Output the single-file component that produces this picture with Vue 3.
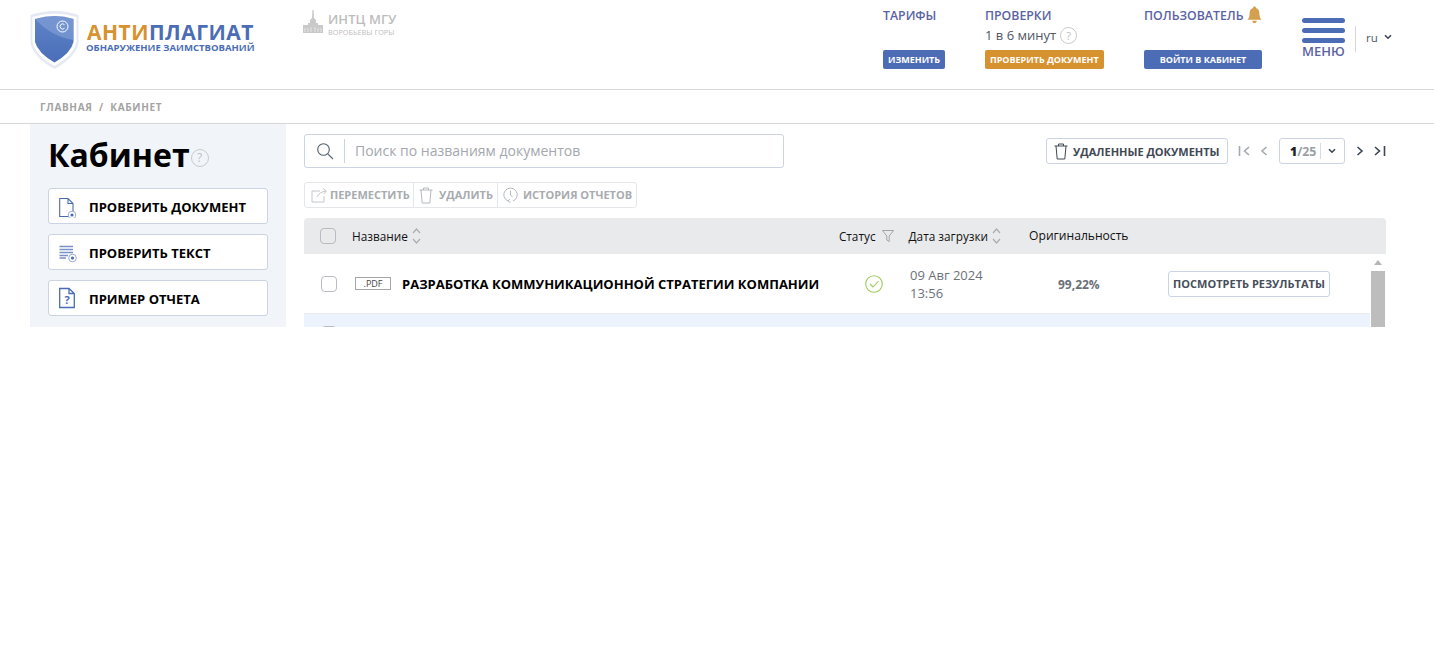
<script setup>
const nav = [
  { title: 'ТАРИФЫ', btn: 'ИЗМЕНИТЬ', cls: 'col-a', btnCls: '' },
  { title: 'ПРОВЕРКИ', btn: 'ПРОВЕРИТЬ ДОКУМЕНТ', cls: 'col-b', btnCls: 'orange', sub: '1 в 6 минут' },
  { title: 'ПОЛЬЗОВАТЕЛЬ', btn: 'ВОЙТИ В КАБИНЕТ', cls: 'col-c', btnCls: 'wide', bell: true }
]
</script>

<template>
  <div class="page">
    <header class="header">
      <div class="logo">
        <svg class="shield" width="50" height="60" viewBox="0 0 50 60">
          <defs>
            <linearGradient id="sg" x1="0" y1="0" x2="0" y2="1">
              <stop offset="0" stop-color="#5f84c8" />
              <stop offset="1" stop-color="#4a6eb8" />
            </linearGradient>
          </defs>
          <path d="M0.5 6 Q25 -2 48.5 6 L48.5 34 Q46 48 24.5 60 Q3 48 .5 34 Z" fill="#e4e9f4" />
          <path d="M2.5 8 Q25 1 46.5 8 L46.5 33 Q44 46 24.5 57 Q5 46 2.5 33 Z" fill="#fff" />
          <path d="M5 10 Q25 4 43.5 10 L43.5 33 Q41 44 24.5 53.5 Q8 44 5 33 Z" fill="url(#sg)" />
          <path d="M5 10 Q25 4 43.5 10 L43.5 31 Q22 28 5 10 Z" fill="#8ba6d8" opacity=".55" />
          <circle cx="32.5" cy="17.5" r="5.5" fill="none" stroke="#fff" stroke-width="1" />
          <path d="M34.5 15.7 A2.6 2.6 0 1 0 34.5 19.3" fill="none" stroke="#fff" stroke-width="1" />
        </svg>
        <div class="logo-text">
          <div class="logo-name"><span class="orange-t">АНТИ</span>ПЛАГИАТ</div>
          <div class="logo-sub">ОБНАРУЖЕНИЕ ЗАИМСТВОВАНИЙ</div>
        </div>
      </div>

      <div class="partner">
        <svg width="20" height="24" viewBox="0 0 20 24">
          <path d="M9.4 0 L10.6 0 L11 8 L13 10 L13 13 L15 13 L15 15 L20 15 L20 23 L0 23 L0 15 L5 15 L5 13 L7 13 L7 10 L9 8 Z" fill="#c9c9c9" />
          <path d="M2 18 V22 M5 18 V22 M8 17 V22 M12 17 V22 M15 18 V22 M18 18 V22" stroke="#eee" stroke-width=".8" />
        </svg>
        <div>
          <div class="partner-name">ИНТЦ МГУ</div>
          <div class="partner-sub">ВОРОБЬЕВЫ ГОРЫ</div>
        </div>
      </div>

      <nav class="nav">
        <div v-for="n in nav" :key="n.title" class="nav-col" :class="n.cls">
          <div class="nav-title">
            {{ n.title }}
            <svg v-if="n.bell" class="bell" width="15" height="18" viewBox="0 0 14 16">
              <path d="M7 0 C8 0 8.4 .6 8.4 1.4 C11 2.2 11.6 4.4 11.6 7 C11.6 9.6 12.4 11 13.6 12.4 L.4 12.4 C1.6 11 2.4 9.6 2.4 7 C2.4 4.4 3 2.2 5.6 1.4 C5.6 .6 6 0 7 0 Z M5 13.4 L9 13.4 C9 14.8 8.2 15.6 7 15.6 C5.8 15.6 5 14.8 5 13.4 Z" fill="#d2a04e" />
            </svg>
          </div>
          <div class="nav-sub">
            <template v-if="n.sub">
              {{ n.sub }}
              <span class="help">?</span>
            </template>
          </div>
          <a class="nav-btn" :class="n.btnCls">{{ n.btn }}</a>
        </div>
      </nav>

      <div class="menu">
        <span class="bar"></span><span class="bar"></span><span class="bar"></span>
        <span class="menu-label">МЕНЮ</span>
      </div>
      <div class="lang">
        ru
        <svg width="8" height="6" viewBox="0 0 8 6"><path d="M1 1.2 L4 4.2 L7 1.2" fill="none" stroke="#3d4654" stroke-width="1.6" /></svg>
      </div>
    </header>

    <div class="crumbs">ГЛАВНАЯ&nbsp;&nbsp;/&nbsp;&nbsp;КАБИНЕТ</div>

    <main class="body">
      <aside class="side">
        <h1 class="side-title">Кабинет<span class="help big">?</span></h1>
        <a class="side-btn">
          <svg width="20" height="24" viewBox="0 0 20 24">
            <path d="M.7 4.5 H9 L14 9.5 V22.5 H.7 Z M9 4.5 V9.5 H14" fill="none" stroke="#4a6cb5" stroke-width="1.1" />
            <circle cx="13" cy="21" r="3.8" fill="#fff" stroke="#8da3cf" stroke-width=".9" />
            <circle cx="13" cy="21" r="1.6" fill="#4a6cb5" />
          </svg>
          ПРОВЕРИТЬ ДОКУМЕНТ
        </a>
        <a class="side-btn">
          <svg width="20" height="24" viewBox="0 0 20 24">
            <path d="M.5 6.5 H14 M.5 9.5 H14 M.5 12.5 H14 M.5 15.5 H9 M.5 18 H7" fill="none" stroke="#7891c8" stroke-width="1.4" />
            <circle cx="13.5" cy="18" r="3.8" fill="#fff" stroke="#8da3cf" stroke-width=".9" />
            <circle cx="13.5" cy="18" r="1.6" fill="#4a6cb5" />
          </svg>
          ПРОВЕРИТЬ ТЕКСТ
        </a>
        <a class="side-btn">
          <svg width="20" height="24" viewBox="0 0 20 24">
            <path d="M.7 2.5 H10 L15.3 7.5 V21.5 H.7 Z M10 2.5 V7.5 H15.3" fill="none" stroke="#4a6cb5" stroke-width="1.3" />
            <text x="8" y="18" text-anchor="middle" class="q">?</text>
          </svg>
          ПРИМЕР ОТЧЕТА
        </a>
      </aside>

      <section class="content">
        <div class="top">
          <div class="search">
            <svg width="18" height="18" viewBox="0 0 18 18">
              <circle cx="7.5" cy="7.5" r="5.8" fill="none" stroke="#55606e" stroke-width="1.1" />
              <path d="M11.8 11.8 L17 17" stroke="#55606e" stroke-width="1.1" />
            </svg>
            <span class="search-sep"></span>
            <span class="search-ph">Поиск по названиям документов</span>
          </div>
          <div class="top-right">
            <a class="deleted">
              <svg width="14" height="17" viewBox="0 0 14 17">
                <path d="M.5 3 H13.5 M4.5 3 V1 H9.5 V3 M2 3 L3.2 16 H10.8 L12 3" fill="none" stroke="#3f4855" stroke-width="1" />
              </svg>
              УДАЛЕННЫЕ ДОКУМЕНТЫ
            </a>
            <div class="pager">
              <svg class="p-first" width="14" height="10" viewBox="0 0 14 10"><path d="M1.5 0 V10 M11 1 L6.5 5 L11 9" fill="none" stroke="#a5a9af" stroke-width="1.6" /></svg>
              <svg class="p-prev" width="8" height="10" viewBox="0 0 8 10"><path d="M6.5 1 L2 5 L6.5 9" fill="none" stroke="#a5a9af" stroke-width="1.6" /></svg>
              <div class="p-box">
                <span class="p-num"><b>1</b>/25</span>
                <span class="p-sep"></span>
                <svg width="8" height="6" viewBox="0 0 8 6"><path d="M1 1.2 L4 4.2 L7 1.2" fill="none" stroke="#3d4654" stroke-width="1.6" /></svg>
              </div>
              <svg class="p-next" width="8" height="10" viewBox="0 0 8 10"><path d="M1.5 1 L6 5 L1.5 9" fill="none" stroke="#3d4654" stroke-width="1.6" /></svg>
              <svg class="p-last" width="12" height="10" viewBox="0 0 12 10"><path d="M1 1 L5.5 5 L1 9 M10.5 0 V10" fill="none" stroke="#3d4654" stroke-width="1.6" /></svg>
            </div>
          </div>
        </div>

        <div class="tools">
          <span class="tool t1">
            <svg width="17" height="15" viewBox="0 0 17 15"><path d="M9 3 H1 V14 H13 V8 M6 9 Q8 4 15 3 M12 .5 L15.5 3 L12.5 6" fill="none" stroke="#c3c6cb" stroke-width="1" /></svg>
            ПЕРЕМЕСТИТЬ
          </span>
          <span class="tool t2">
            <svg width="14" height="17" viewBox="0 0 14 17"><path d="M.5 3 H13.5 M4.5 3 V1 H9.5 V3 M2 3 L3.2 16 H10.8 L12 3" fill="none" stroke="#b5b8bd" stroke-width="1" /></svg>
            УДАЛИТЬ
          </span>
          <span class="tool t3">
            <svg width="15" height="16" viewBox="0 0 15 16"><path d="M5 14 A6.7 6.7 0 1 1 10 14 M7.5 3.5 V8 L9.5 10 M7.5 15.5 L5 14 L6.8 12" fill="none" stroke="#b5b8bd" stroke-width="1" /></svg>
            ИСТОРИЯ ОТЧЕТОВ
          </span>
        </div>

        <div class="table">
          <div class="thead">
            <span class="check head-check"></span>
            <span class="th th-name">Название</span>
            <svg class="sort" width="9" height="18" viewBox="0 0 9 18"><path d="M1 6 L4.5 2 L8 6 M1 12 L4.5 16 L8 12" fill="none" stroke="#a9adb3" stroke-width="1.2" /></svg>
            <span class="th th-status">Статус</span>
            <svg class="filter" width="12" height="12" viewBox="0 0 12 12"><path d="M.5 .5 H11.5 L7.2 6 V11.5 L4.8 10 V6 Z" fill="none" stroke="#9a9ea4" stroke-width=".9" /></svg>
            <span class="th th-date">Дата загрузки</span>
            <svg class="sort" width="9" height="18" viewBox="0 0 9 18"><path d="M1 6 L4.5 2 L8 6 M1 12 L4.5 16 L8 12" fill="none" stroke="#a9adb3" stroke-width="1.2" /></svg>
            <span class="th th-orig">Оригинальность</span>
          </div>
          <div class="tbody">
            <div class="rows">
              <div class="row">
                <span class="check row-check"></span>
                <span class="pdf">.PDF</span>
                <span class="doc-name">РАЗРАБОТКА КОММУНИКАЦИОННОЙ СТРАТЕГИИ КОМПАНИИ</span>
                <svg class="ok" width="18" height="18" viewBox="0 0 18 18">
                  <circle cx="9" cy="9" r="8.3" fill="none" stroke="#9ccb5a" stroke-width="1.1" />
                  <path d="M5 9 L8 12 L13.5 6" fill="none" stroke="#9ccb5a" stroke-width="1.1" />
                </svg>
                <span class="date">09 Авг 2024<br />13:56</span>
                <span class="pct">99,22%</span>
                <a class="result">ПОСМОТРЕТЬ РЕЗУЛЬТАТЫ</a>
              </div>
              <div class="row next">
                <span class="check row-check"></span>
              </div>
            </div>
            <div class="scroll">
              <span class="arrow"></span>
              <span class="thumb"></span>
            </div>
          </div>
        </div>
      </section>
    </main>
  </div>
</template>

<style>
html, body { margin: 0; background: #fff; }
</style>

<style scoped>
.page {
  height: 671px;
  overflow: hidden;
  font-family: "Open Sans", "Noto Sans", sans-serif;
  color: #3d4654;
  background: #fff;
}
.header {
  height: 89px;
  border-bottom: 1px solid #d6d6d6;
  display: flex;
  align-items: flex-start;
  box-sizing: content-box;
}
.logo {
  display: flex;
  margin: 9px 0 0 30px;
  width: 273px;
}
.shield { flex: none; }
.logo-text { margin: 12px 0 0 7px; }
.logo-name {
  font-size: 21px;
  line-height: 22px;
  font-weight: 700;
  letter-spacing: .48px;
  color: #4a6db5;
  white-space: nowrap;
}
.orange-t { color: #d8922f; }
.logo-sub {
  font-size: 9.55px;
  line-height: 10px;
  font-weight: 700;
  color: #4a6db5;
  margin-left: -1px;
  white-space: nowrap;
}
.partner {
  display: flex;
  gap: 5px;
  margin-top: 10px;
  width: 580px;
  color: #bdbdbd;
}
.partner-name {
  font-size: 13px;
  line-height: 13px;
  margin-top: 3px;
  font-weight: 600;
  letter-spacing: .05px;
}
.partner-sub { font-size: 7.3px; line-height: 10px; margin-top: 1px; }
.nav { display: flex; }
.nav-col { height: 69px; }
.col-a { width: 102px; }
.col-b { width: 159px; }
.col-c { width: 157px; }
.nav-title {
  margin-top: 8px;
  height: 16px;
  display: flex;
  align-items: center;
  gap: 3px;
  font-size: 12.3px;
  line-height: 16px;
  font-weight: 600;
  color: #5b63a3;
  white-space: nowrap;
}
.bell { margin-top: -2px; }
.nav-sub {
  height: 22px;
  display: flex;
  align-items: center;
  gap: 4px;
  font-size: 13px;
  color: #4f5763;
  white-space: nowrap;
}
.nav-sub .help { width: 17px; height: 17px; }
.help {
  width: 16px;
  height: 16px;
  box-sizing: border-box;
  display: inline-flex;
  align-items: center;
  justify-content: center;
  border: 1px solid #c9c9c9;
  border-radius: 50%;
  color: #c0c0c0;
  font-size: 11px;
  font-weight: 400;
}
.nav-btn {
  display: inline-block;
  height: 19px;
  padding: 0 5px;
  margin-top: 4px;
  font-size: 9px;
  line-height: 19px;
  font-weight: 700;
  color: #fff;
  background: #4c6db5;
  border-radius: 2px;
  white-space: nowrap;
}
.nav-btn.orange { background: #d79230; }
.nav-btn.wide { width: 118px; padding: 0; text-align: center; box-sizing: border-box; }
.menu {
  width: 43px;
  margin: 18px 10px 0 1px;
  display: flex;
  flex-direction: column;
  align-items: center;
  gap: 5px;
}
.bar { width: 43px; height: 5px; border-radius: 3px; background: #4c6db5; }
.menu-label {
  font-size: 13px;
  line-height: 15px;
  font-weight: 600;
  color: #5b63a3;
  margin-top: -4px;
}
.lang {
  margin-top: 26px;
  height: 22px;
  padding: 0 0 4px 10px;
  border-left: 1px solid #d6d6d6;
  display: flex;
  align-items: center;
  gap: 6px;
  font-size: 11.5px;
  color: #4f5763;
}
.crumbs {
  height: 33px;
  line-height: 35px;
  padding-left: 40px;
  border-bottom: 1px solid #d6d6d6;
  font-size: 10px;
  font-weight: 700;
  letter-spacing: .66px;
  color: #a3a3a3;
}
.body {
  height: 203px;
  overflow: hidden;
  display: flex;
  padding: 0 48px 0 30px;
}
.side {
  width: 256px;
  flex: none;
  box-sizing: border-box;
  background: #f1f5f9;
  padding: 0 18px;
}
.side-title {
  margin: 0;
  height: 64px;
  box-sizing: border-box;
  padding-bottom: 2px;
  display: flex;
  align-items: center;
  font-size: 32px;
  line-height: 60px;
  font-weight: 700;
  color: #000;
}
.help.big { width: 18px; height: 18px; margin: 6px 0 0 1px; font-size: 12px; }
.side-btn {
  width: 220px;
  height: 36px;
  box-sizing: border-box;
  margin-bottom: 10px;
  display: flex;
  align-items: center;
  gap: 10px;
  padding: 1px 0 0 10px;
  background: #fff;
  border: 1px solid #ccd3e2;
  border-radius: 3px;
  font-size: 13px;
  font-weight: 700;
  color: #000;
  white-space: nowrap;
}
.side-btn svg { flex: none; margin-top: -1px; }
.side-btn .q { font: 700 11px "Open Sans", sans-serif; fill: #4a6cb5; }
.content { flex: 1; margin-left: 18px; min-width: 0; }
.top {
  padding-top: 10px;
  height: 34px;
  display: flex;
  justify-content: space-between;
}
.search {
  width: 480px;
  height: 34px;
  box-sizing: border-box;
  border: 1px solid #ccd3e2;
  border-radius: 3px;
  display: flex;
  align-items: center;
  padding-left: 11px;
}
.search-sep { width: 1px; height: 24px; background: #ccd3e2; margin: 0 10px 0 10px; }
.search-ph { font-size: 14px; color: #a4a8ae; margin-top: -2px; }
.top-right {
  display: flex;
  align-items: center;
  height: 26px;
  margin-top: 4px;
}
.deleted {
  width: 182px;
  height: 26px;
  box-sizing: border-box;
  border: 1px solid #ccd3e2;
  border-radius: 3px;
  display: flex;
  align-items: center;
  gap: 5px;
  padding-left: 7px;
  font-size: 11px;
  font-weight: 700;
  color: #3f4855;
  white-space: nowrap;
}
.pager { display: flex; align-items: center; }
.p-first { margin-left: 10px; }
.p-prev { margin-left: 8px; }
.p-box {
  margin-left: 11px;
  width: 66px;
  height: 26px;
  box-sizing: border-box;
  border: 1px solid #ccd3e2;
  border-radius: 3px;
  display: flex;
  align-items: center;
  font-size: 12.3px;
  font-weight: 700;
  color: #9a9ea5;
  padding-left: 10px;
}
.p-num b { color: #222; }
.p-sep { width: 1px; height: 16px; background: #d6dbe6; margin: 0 7px 0 4px; }
.p-next { margin-left: 11px; }
.p-last { margin-left: 10px; }
.tools {
  margin-top: 14px;
  height: 26px;
  width: 333px;
  box-sizing: border-box;
  border: 1px solid #e4e6ea;
  border-radius: 3px;
  display: flex;
  font-size: 11px;
  font-weight: 700;
  color: #a8abb0;
  white-space: nowrap;
}
.tool {
  display: flex;
  align-items: center;
  height: 24px;
  padding-bottom: 2px;
  border-right: 1px solid #e4e6ea;
  box-sizing: border-box;
}
.tool svg { margin-top: 2px; }
.tool:last-child { border-right: 0; }
.t1 { width: 109px; padding-left: 6px; gap: 2px; }
.t2 { width: 84px; padding-left: 5px; gap: 6px; }
.t3 { flex: 1; padding-left: 5px; gap: 5px; }
.table { margin-top: 10px; }
.thead {
  height: 36px;
  background: #e9eaec;
  border-radius: 4px 4px 0 0;
  display: flex;
  align-items: center;
  font-size: 11.8px;
  color: #111;
  white-space: nowrap;
}
.th { margin-top: -1px; }
.check {
  width: 16px;
  height: 16px;
  box-sizing: border-box;
  border: 1px solid #b9bdc3;
  border-radius: 4px;
  background: #fff;
  flex: none;
}
.head-check { margin-left: 16px; background: #e9eaec; }
.th-name { margin-left: 16px; }
.thead .sort { margin-left: 4px; }
.th-status { margin-left: 418px; }
.filter { margin-left: 6px; }
.th-date { margin-left: 15px; }
.th-orig { margin-left: 28px; font-size: 12.1px; }
.tbody { display: flex; }
.rows { flex: 1; min-width: 0; }
.row {
  height: 59px;
  box-sizing: content-box;
  border-bottom: 1px solid #e8eaee;
  display: flex;
  align-items: center;
}
.row.next { background: #edf3fc; border-bottom: 0; align-items: flex-start; padding-top: 12px; height: 59px; box-sizing: border-box; }
.row-check { margin-left: 17px; }
.pdf {
  margin-left: 18px;
  width: 36px;
  height: 13px;
  box-sizing: border-box;
  border: 1px solid #a5a5a5;
  font-size: 9px;
  line-height: 11px;
  text-align: center;
  color: #444;
  flex: none;
}
.doc-name {
  margin: 0 0 0 11px;
  width: 463px;
  font-size: 13px;
  font-weight: 700;
  color: #000;
  white-space: nowrap;
  flex: none;
}
.ok { flex: none; }
.date {
  margin-left: 27px;
  width: 100px;
  flex: none;
  font-size: 13px;
  line-height: 18px;
  color: #6d7278;
}
.pct {
  width: 60px;
  margin: 2px 0 0 48px;
  flex: none;
  font-size: 12px;
  font-weight: 700;
  color: #6a7078;
}
.result {
  margin-left: 50px;
  width: 162px;
  height: 26px;
  box-sizing: border-box;
  border: 1px solid #ccd3e2;
  border-radius: 3px;
  font-size: 11px;
  line-height: 24px;
  text-align: center;
  font-weight: 700;
  color: #464e5a;
  white-space: nowrap;
  flex: none;
}
.scroll {
  width: 16px;
  flex: none;
  display: flex;
  flex-direction: column;
  align-items: center;
  background: #fff;
}
.arrow {
  margin: 6px 1px 0 0;
  width: 0;
  height: 0;
  border-left: 4px solid transparent;
  border-right: 4px solid transparent;
  border-bottom: 5px solid #b5b5b5;
}
.thumb { margin-top: 6px; width: 14px; height: 200px; background: #bdbdbd; }
</style>
